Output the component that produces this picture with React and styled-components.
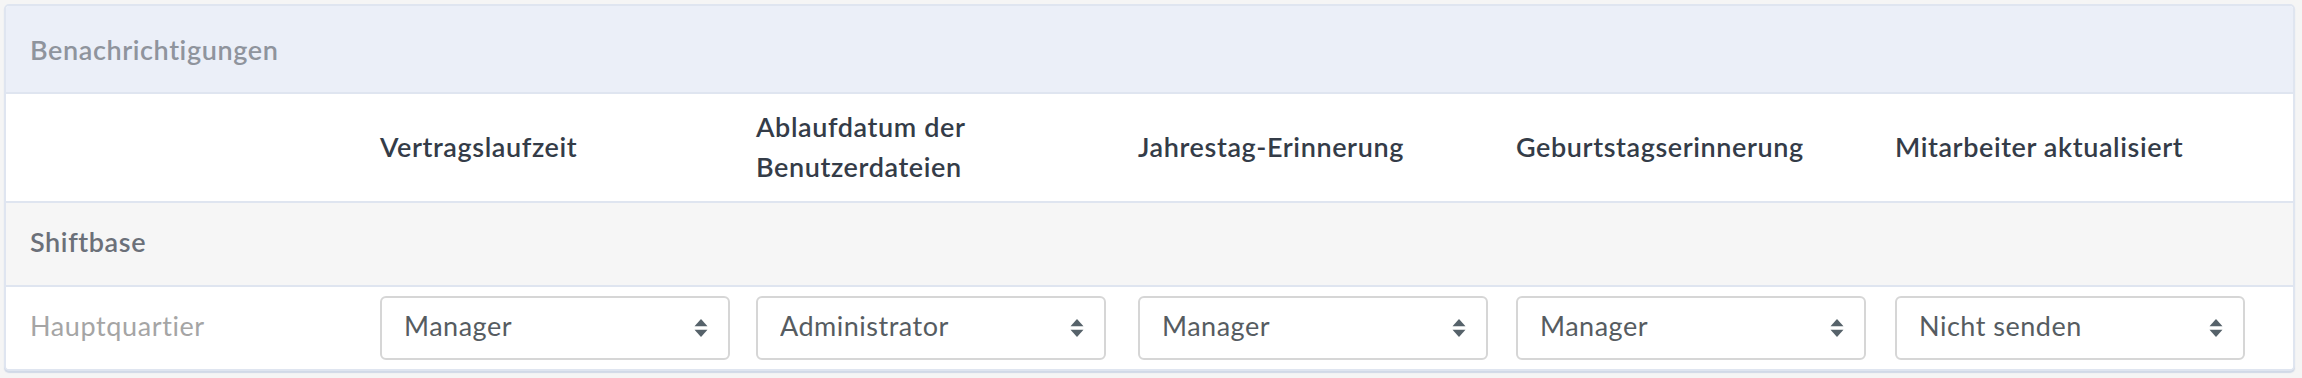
import styled, { createGlobalStyle } from 'styled-components';

const GlobalStyle = createGlobalStyle`
  html, body {
    margin: 0;
    padding: 0;
    background-color: #f5f5f5;
    font-family: Lato, "Open Sans", sans-serif;
  }
`;

const columns = [
  'Vertragslaufzeit',
  'Ablaufdatum der Benutzerdateien',
  'Jahrestag-Erinnerung',
  'Geburtstagserinnerung',
  'Mitarbeiter aktualisiert',
];

const options = ['Manager', 'Administrator', 'Nicht senden'];
const values = ['Manager', 'Administrator', 'Manager', 'Manager', 'Nicht senden'];

function Arrows() {
  return (
    <ArrowIcon width="14" height="20" viewBox="0 0 14 20">
      <path d="M7 1 L13.5 8.2 L0.5 8.2 Z" fill="#56626a" />
      <path d="M7 19 L13.5 11.8 L0.5 11.8 Z" fill="#56626a" />
    </ArrowIcon>
  );
}

export default function App() {
  return (
    <Page>
      <GlobalStyle />
      <Card>
        <CardHeader>Benachrichtigungen</CardHeader>
        <Row>
          <Cell />
          {columns.map((c) => (
            <ColumnTitle key={c}>{c}</ColumnTitle>
          ))}
          <Cell />
        </Row>
        <Row group>
          <GroupLabel>Shiftbase</GroupLabel>
        </Row>
        <Row last>
          <DeptLabel>Hauptquartier</DeptLabel>
          {values.map((v, i) => (
            <Cell key={i}>
              <SelectWrap>
                <Select defaultValue={v}>
                  {options.map((o) => (
                    <option key={o} value={o}>{o}</option>
                  ))}
                </Select>
                <Arrows />
              </SelectWrap>
            </Cell>
          ))}
          <Cell />
        </Row>
      </Card>
    </Page>
  );
}

const Page = styled.div`
  padding: 4px 7px 8px 4px;
`;

const Card = styled.div`
  background-color: #fff;
  border: 2px solid #dfe5f0;
  border-radius: 5px;
  box-shadow: 0 2px 1px rgba(200, 210, 228, 0.8);
  overflow: hidden;
`;

const CardHeader = styled.div`
  height: 86px;
  display: flex;
  align-items: center;
  padding-left: 24px;
  background-color: #ebeff8;
  border-bottom: 2px solid #dfe5f0;
  color: #8f949d;
  font-size: 27px;
  font-weight: 600;
  letter-spacing: 0.6px;
`;

const Row = styled.div`
  display: grid;
  grid-template-columns: 350px 376px 382px 378px 379px 378px 1fr;
  align-items: center;
  min-height: ${(p) => (p.group ? '82px' : p.last ? '82px' : '107px')};
  background-color: ${(p) => (p.group ? '#f6f6f6' : '#fff')};
  border-bottom: ${(p) => (p.last ? 'none' : '2px solid #dfe5f0')};
`;

const Cell = styled.div`
  padding-left: 24px;
  padding-right: 4px;
`;

const ColumnTitle = styled(Cell)`
  color: #343c48;
  font-size: 27px;
  font-weight: 600;
  letter-spacing: 0.6px;
  line-height: 40px;
  padding-right: 40px;
  padding-bottom: 2px;
`;

const GroupLabel = styled(Cell)`
  color: #6b7079;
  font-size: 27px;
  font-weight: 600;
  letter-spacing: 0.6px;
  padding-bottom: 5px;
`;

const DeptLabel = styled(Cell)`
  color: #a5a5a5;
  font-size: 27px;
  letter-spacing: 0.6px;
  padding-bottom: 5px;
`;

const SelectWrap = styled.div`
  position: relative;
  width: 350px;
`;

const Select = styled.select`
  appearance: none;
  width: 100%;
  height: 64px;
  padding: 0 50px 5px 22px;
  border: 2px solid #d6d6d6;
  border-radius: 6px;
  background-color: #fff;
  color: #565c61;
  font-family: Lato, "Open Sans", sans-serif;
  font-size: 27px;
  letter-spacing: 0.5px;
  outline: none;
`;

const ArrowIcon = styled.svg`
  position: absolute;
  right: 22px;
  top: 22px;
  pointer-events: none;
`;
